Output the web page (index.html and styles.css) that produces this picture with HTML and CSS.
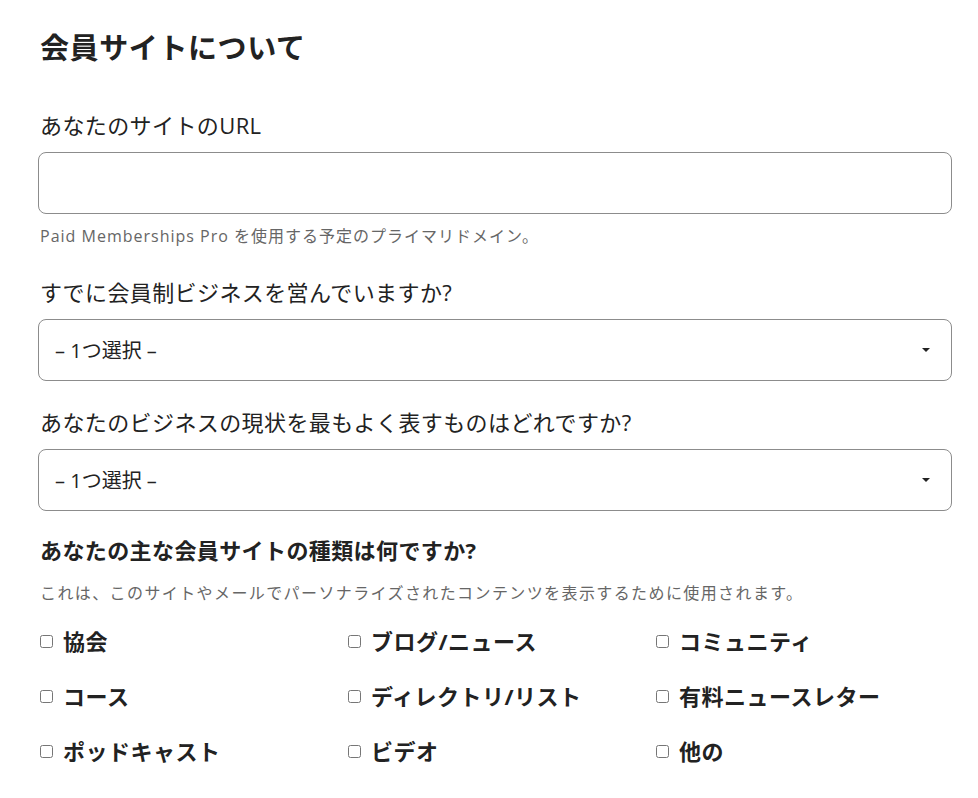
FILE: index.html
```html
<!DOCTYPE html>
<html lang="ja">
<head>
    <meta charset="UTF-8">
    <meta name="viewport" content="width=device-width, initial-scale=1.0">
    <title>会員サイトについて</title>
    <link rel="stylesheet" href="styles.css">
</head>
<body>
    <div class="form">
        <h2>会員サイトについて</h2>

        <div class="field">
            <label for="siteUrl">あなたのサイトのURL</label>
            <input type="text" id="siteUrl">
            <p class="hint">Paid Memberships Pro を使用する予定のプライマリドメイン。</p>
        </div>

        <div class="field">
            <label for="business">すでに会員制ビジネスを営んでいますか?</label>
            <div class="select">
                <select id="business">
                    <option>– 1つ選択 –</option>
                </select>
            </div>
        </div>

        <div class="field">
            <label for="status">あなたのビジネスの現状を最もよく表すものはどれですか?</label>
            <div class="select">
                <select id="status">
                    <option>– 1つ選択 –</option>
                </select>
            </div>
        </div>

        <div class="field types">
            <p class="label-bold">あなたの主な会員サイトの種類は何ですか?</p>
            <p class="hint spaced">これは、このサイトやメールでパーソナライズされたコンテンツを表示するために使用されます。</p>
            <div class="checks">
                <label class="check"><input type="checkbox"> 協会</label>
                <label class="check"><input type="checkbox"> ブログ/ニュース</label>
                <label class="check"><input type="checkbox"> コミュニティ</label>
                <label class="check"><input type="checkbox"> コース</label>
                <label class="check"><input type="checkbox"> ディレクトリ/リスト</label>
                <label class="check"><input type="checkbox"> 有料ニュースレター</label>
                <label class="check"><input type="checkbox"> ポッドキャスト</label>
                <label class="check"><input type="checkbox"> ビデオ</label>
                <label class="check"><input type="checkbox"> 他の</label>
            </div>
        </div>
    </div>
</body>
</html>
```

FILE: styles.css
```css
body {
    margin: 0;
    background: #fff;
    color: #222;
    font-family: "Open Sans", "Noto Sans CJK JP", sans-serif;
}

.form {
    width: 914px;
    padding: 28px 0 0 38px;
}

h2 {
    margin: 0 0 42px 2px;
    font-size: 29px;
    font-weight: 700;
    line-height: 40px;
    letter-spacing: 0.6px;
}

.field {
    margin-bottom: 26px;
}

.field.types {
    margin-top: -2px;
}

.field label,
.label-bold {
    display: block;
    margin: 0 0 12px 2px;
    font-size: 22px;
    line-height: 30px;
    letter-spacing: 0.4px;
}

.label-bold {
    font-weight: 700;
}

input[type="text"],
select {
    display: block;
    box-sizing: border-box;
    width: 100%;
    height: 62px;
    border: 1px solid #8c8c8c;
    border-radius: 8px;
    background: #fff;
    font-family: inherit;
    font-size: 20px;
    color: #222;
}

.select {
    position: relative;
}

select {
    padding: 0 40px 0 16px;
    appearance: none;
    -webkit-appearance: none;
}

.select::after {
    content: "";
    position: absolute;
    right: 22px;
    top: 29px;
    border-left: 4px solid transparent;
    border-right: 4px solid transparent;
    border-top: 4px solid #222;
    pointer-events: none;
}

.hint {
    margin: 11px 0 30px 2px;
    font-size: 16px;
    line-height: 22px;
    letter-spacing: 1px;
    color: #666;
}

.label-bold + .hint {
    margin-top: 17px;
}

.hint.spaced {
    margin-bottom: 0;
    letter-spacing: 1.4px;
}

.checks {
    display: grid;
    grid-template-columns: repeat(3, 1fr);
    column-gap: 10px;
    row-gap: 20px;
    margin-top: 20px;
}

.field .check {
    display: flex;
    align-items: center;
    margin: 0 0 0 2px;
    font-weight: 700;
    line-height: 35px;
    letter-spacing: 0.5px;
}

.check input {
    width: 13px;
    height: 13px;
    margin: 0 10px 0 0;
}
```
